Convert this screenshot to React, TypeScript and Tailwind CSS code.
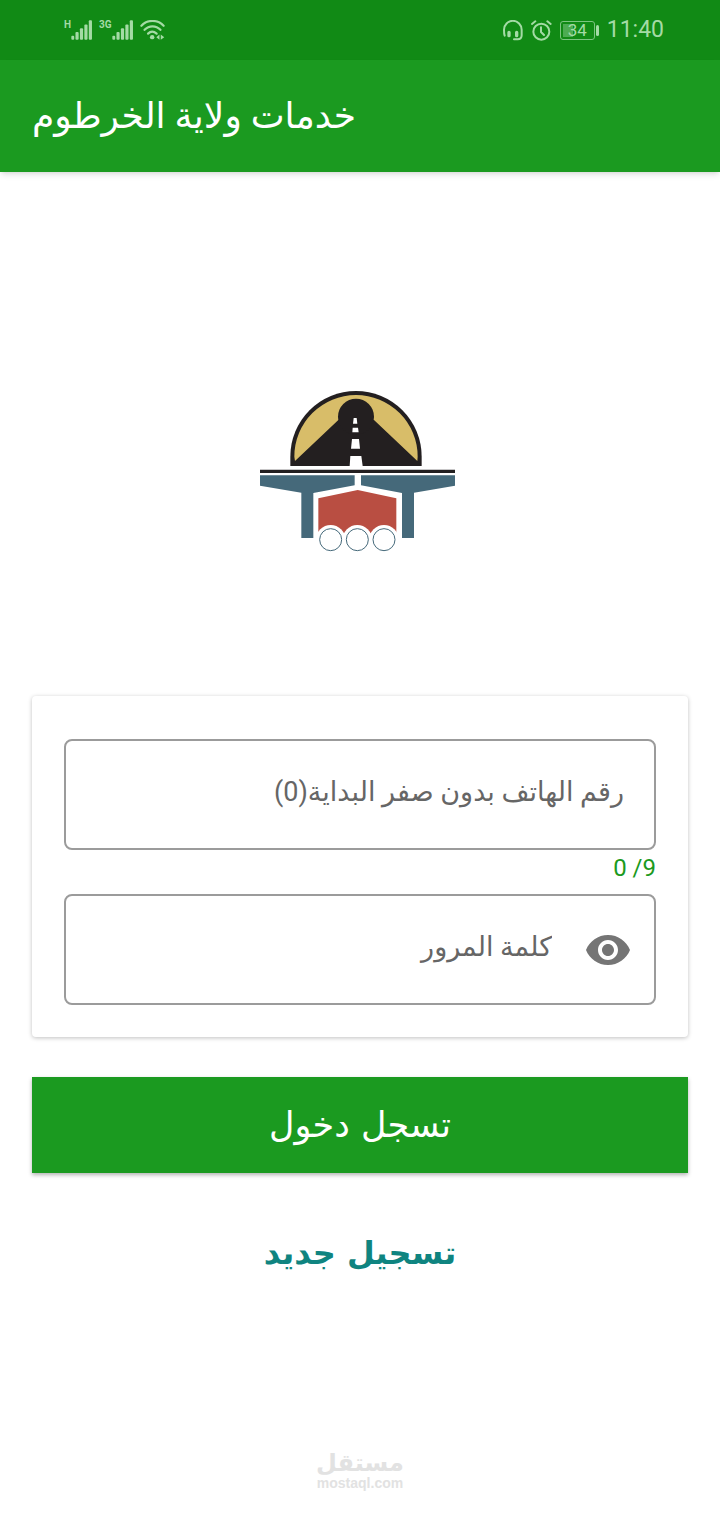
import { useState } from "react";
import { MdVisibility, MdVisibilityOff } from "react-icons/md";

const PHONE_LENGTH = 9;

const Signal = ({ label }: { label: string }) => (
  <div className="flex items-start">
    <span className="text-[10px] leading-[10px] font-bold">{label}</span>
    <svg viewBox="0 0 66 63" className="h-5 w-[21px]" fill="currentColor" aria-hidden="true">
      <rect x="1" y="50" width="9" height="12" rx="3" />
      <rect x="14" y="38" width="10" height="24" rx="3" />
      <rect x="28" y="26" width="10" height="36" rx="3" />
      <rect x="42" y="14" width="10" height="48" rx="3" />
      <rect x="56" y="1" width="10" height="61" rx="3" />
    </svg>
  </div>
);

const WifiIcon = () => (
  <svg viewBox="0 0 78 63" className="h-5 w-[25px]" fill="none" stroke="currentColor" strokeWidth="7" strokeLinecap="round" aria-hidden="true">
    <path d="M4 18C23-2 55-2 74 18" />
    <path d="M14 31C28 16 50 16 64 31" />
    <path d="M25 43C33 35 43 35 52 43" />
    <circle cx="38" cy="54" r="7" fill="currentColor" stroke="none" />
    <path d="M61 46v16l-10-8zM65 46v16l11-8z" fill="currentColor" stroke="none" />
  </svg>
);

const HeadsetIcon = () => (
  <svg viewBox="0 0 60 63" className="h-[21px] w-[20px]" fill="none" stroke="currentColor" strokeWidth="6" strokeLinecap="round" aria-hidden="true">
    <path d="M5 47C3 42 3 36 3 29a26 26 0 0 1 53 0v17q0 12-12 12H33" />
    <path d="M18 37v10M41 37v10" strokeWidth="10" />
  </svg>
);

const AlarmIcon = () => (
  <svg viewBox="0 0 63 63" className="h-[21px] w-[21px]" fill="none" stroke="currentColor" strokeWidth="6" strokeLinecap="round" strokeLinejoin="round" aria-hidden="true">
    <circle cx="31" cy="35" r="24" />
    <path d="M30 22v14l9 9M3 12L13 4M59 12L49 4" />
  </svg>
);

const Battery = ({ level }: { level: number }) => (
  <div className="flex items-center gap-px">
    <div className="relative flex h-[19px] w-[35px] items-center justify-center rounded-[3px] border border-[#7cc580]">
      <div className="absolute inset-y-[2px] left-[2px] w-[10px] bg-[#4dac52]" />
      <span className="relative text-[17px] leading-[17px]">{level}</span>
    </div>
    <div className="h-[11px] w-[3px] rounded-sm bg-current" />
  </div>
);

const StatusBar = () => (
  <div dir="ltr" className="flex h-[60px] items-center justify-between bg-[#118a15] pr-14 pl-16 font-['Roboto',sans-serif] text-[#a4dba5]">
    <div className="flex items-center gap-[7px]">
      <Signal label="H" />
      <Signal label="3G" />
      <WifiIcon />
    </div>
    <div className="flex items-center gap-2">
      <HeadsetIcon />
      <AlarmIcon />
      <Battery level={34} />
      <span className="text-[23px]">11:40</span>
    </div>
  </div>
);

const Logo = () => (
  <svg viewBox="30 30 600 486" className="h-[162px] w-[200px]" role="img" aria-label="شعار">
    {/* Road and sun */}
    <path d="M121 258v-28a197 197 0 0 1 394 0v28z" fill="#231f20" />
    <path d="M135 243L133 230A185 185 0 0 1 503 230L502 243L372 120H265z" fill="#d8bd69" />
    <circle cx="318" cy="110" r="54" fill="#231f20" />
    <path d="M311 114h9l2 17h-13zM308 143h16l2 14h-19zM306 177h21l3 29h-27zM301 228h33l4 30h-39z" fill="#fff" />
    {/* Deck */}
    <path d="M30 269h585v10H30z" fill="#231f20" />
    {/* Piers */}
    <path d="M30 286h284v30l-124 23v135h-36V338L30 317zM333 286h282v31l-123 21v136h-36V339l-123-23z" fill="#45697a" />
    {/* Truck */}
    <path d="M205 355l118-25 116 25v105H205z" fill="#b94e42" />
    {[242, 322, 402].map((cx) => (
      <g key={cx}>
        <circle cx={cx} cy="479" r="44" fill="#fff" />
        <circle cx={cx} cy="479" r="33" fill="#fff" stroke="#45697a" strokeWidth="3" />
      </g>
    ))}
  </svg>
);

const fieldClass =
  "h-[111px] w-full rounded-lg border-2 border-[#9b9b9b] bg-white pb-1.5 pl-8 text-[27px] text-[#666] outline-none placeholder:text-[#666] placeholder:opacity-100 focus:border-[#1b9a20]";

export default function App() {
  const [phone, setPhone] = useState("");
  const [password, setPassword] = useState("");
  const [visible, setVisible] = useState(false);

  return (
    <div dir="rtl" className="min-h-screen bg-white font-['Roboto','DejaVu_Sans',sans-serif]">
      <StatusBar />
      <header className="flex h-28 items-center bg-[#1b9a20] px-8 shadow-md" dir="ltr">
        <h1 dir="rtl" className="text-4xl text-white">خدمات ولاية الخرطوم</h1>
      </header>

      <main className="flex flex-col px-8">
        <div className="flex justify-center pt-[218px] pb-36">
          <Logo />
        </div>

        <form onSubmit={(e) => e.preventDefault()}>
          <div className="rounded bg-white px-8 pt-[43px] pb-8 shadow-[0_1px_4px_rgba(0,0,0,0.25)]">
            <input
              type="tel"
              dir="rtl"
              aria-label="رقم الهاتف"
              placeholder="رقم الهاتف بدون صفر البداية(0)"
              maxLength={PHONE_LENGTH}
              value={phone}
              onChange={(e) => setPhone(e.target.value)}
              className={`${fieldClass} pr-[30px]`}
            />
            <p dir="ltr" className="h-11 pt-0.5 text-right text-2xl text-[#1b9a20]">
              {phone.length} /{PHONE_LENGTH}
            </p>
            <div className="relative">
              <input
                type={visible ? "text" : "password"}
                aria-label="كلمة المرور"
                placeholder="كلمة المرور"
                value={password}
                onChange={(e) => setPassword(e.target.value)}
                className={`${fieldClass} pr-[102px]`}
              />
              <button
                type="button"
                aria-label="إظهار كلمة المرور"
                onClick={() => setVisible(!visible)}
                className="absolute inset-y-0 right-6 flex items-center text-[#757575]"
              >
                {visible ? <MdVisibilityOff className="size-12" /> : <MdVisibility className="size-12" />}
              </button>
            </div>
          </div>

          <button
            type="submit"
            className="mt-10 flex h-24 w-full items-center justify-center bg-[#1b9a20] font-['DejaVu_Sans',sans-serif] text-[35px] text-white shadow-[0_2px_4px_rgba(0,0,0,0.3)]"
          >
            تسجل دخول
          </button>
        </form>

        <a href="#register" className="mt-14 self-center font-['DejaVu_Sans',sans-serif] text-[32px] leading-12 font-bold text-[#0f8480]">
          تسجيل جديد
        </a>
      </main>

      <footer className="flex flex-col items-center pt-[174px] font-['Liberation_Sans','DejaVu_Sans',sans-serif] font-bold text-[#e2e2e2]">
        <span className="text-2xl leading-6">مستقل</span>
        <span className="text-sm leading-4">mostaql.com</span>
      </footer>
    </div>
  );
}
